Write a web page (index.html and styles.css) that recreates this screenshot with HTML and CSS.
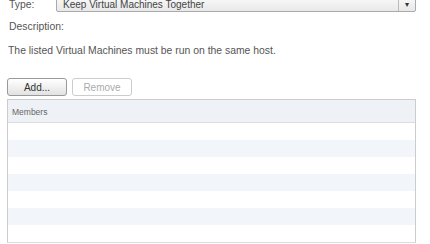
FILE: index.html
```html
<!DOCTYPE html>
<html lang="en">
<head>
<meta charset="UTF-8">
<title>Rule</title>
<link rel="stylesheet" href="styles.css">
</head>
<body>
<div class="panel">
  <div class="type-row">
    <span class="label">Type:</span>
    <div class="select">
      <span class="select-text">Keep Virtual Machines Together</span>
      <span class="select-arrow">&#9662;</span>
    </div>
  </div>
  <p class="desc-label">Description:</p>
  <p class="desc">The listed Virtual Machines must be run on the same host.</p>

  <div class="actions">
    <button class="btn">Add...</button>
    <button class="btn" disabled>Remove</button>
  </div>

  <div class="grid">
    <div class="grid-head">Members</div>
    <div class="row"></div>
    <div class="row alt"></div>
    <div class="row"></div>
    <div class="row alt"></div>
    <div class="row"></div>
    <div class="row alt"></div>
    <div class="row"></div>
  </div>
</div>
</body>
</html>
```

FILE: styles.css
```css
body {
  margin: 0;
  background: #fff;
  font-family: "Liberation Sans", Arial, sans-serif;
  font-size: 10.4px;
  color: #555;
}
.panel {
  width: 409px;
  padding: 0 0 0 7px;
  margin-top: -3px;
}
.type-row {
  display: flex;
  align-items: center;
  height: 15px;
}
.label {
  width: 47px;
  padding-left: 2px;
}
.select {
  flex: 1;
  display: flex;
  height: 13px;
  border: 1px solid #aaa;
  border-radius: 2px;
  background: linear-gradient(#f9f9f9, #e8e8e8);
}
.select-text {
  flex: 1;
  padding-left: 6px;
  font-size: 10px;
  line-height: 14px;
  color: #444;
}
.select-arrow {
  width: 16px;
  border-left: 1px solid #bbb;
  text-align: center;
  font-size: 8px;
  line-height: 14px;
  color: #333;
}
.desc-label {
  margin: 8px 0 0 2px;
  line-height: 14px;
}
.desc {
  margin: 10px 0 0 1px;
  line-height: 14px;
}
.actions {
  display: flex;
  gap: 5px;
  margin-top: 20px;
}
.btn {
  width: 60px;
  height: 18px;
  padding: 0;
  font-family: inherit;
  font-size: 10px;
  color: #333;
  border: 1px solid #999;
  border-radius: 3px;
  background: linear-gradient(#fff, #e2e2e2);
}
.btn:disabled {
  color: #aaa;
  border-color: #ccc;
  background: #fff;
}
.grid {
  margin-top: 3px;
  border: 1px solid #ccc;
  border-bottom: 1px solid #ddd;
}
.grid-head {
  height: 20px;
  padding: 2px 0 0 4px;
  line-height: 20px;
  font-size: 8.5px;
  color: #666;
  background: #eef1f5;
  border-bottom: 1px solid #dcdcdc;
}
.row {
  height: 17px;
  background: #fff;
}
.row.alt {
  background: #f2f5f9;
}
```
